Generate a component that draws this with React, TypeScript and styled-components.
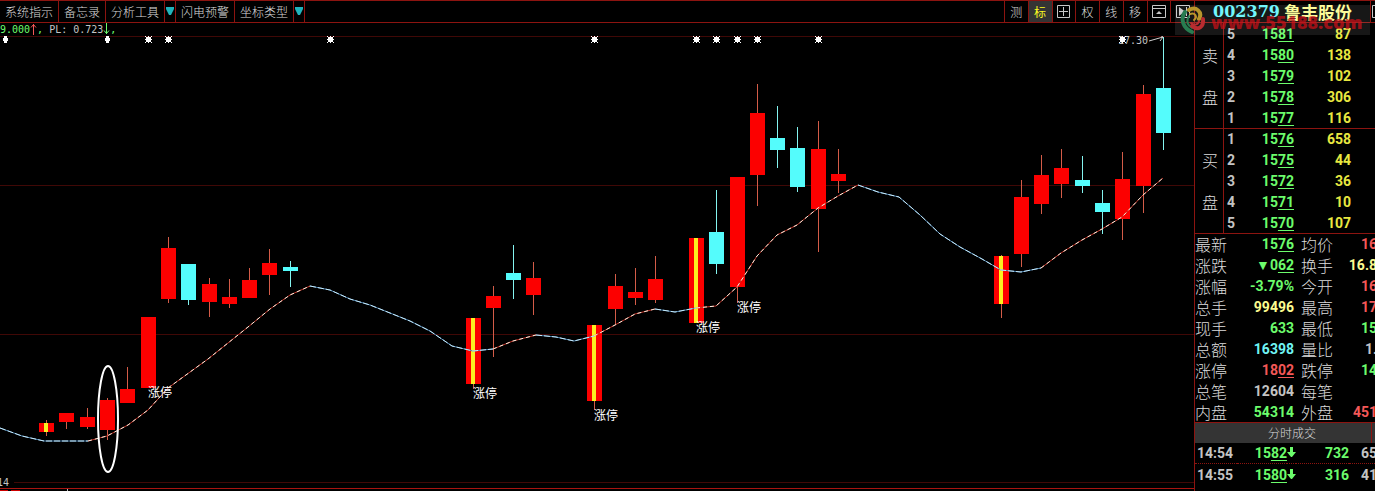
import React from "react";
import styled, { createGlobalStyle, css } from "styled-components";

const cjk = `"Noto Sans CJK SC"`;
const red = "#8c1410";
const label = "#dcdcdc";
const tones = {
  grey: "#c4c4c4",
  green: "#6cfc6c",
  yellow: "#e8e840",
  cream: "#fcfc90",
  cyan: "#70f4f4",
  red: "#f45858",
};
type Tone = keyof typeof tones;

const Global = createGlobalStyle`
  * { box-sizing: border-box; }
  body { margin: 0; background: #000; color: ${tones.grey}; font-family: "Liberation Sans", ${cjk}, sans-serif; }
`;

const Shell = styled.main`
  position: relative;
  display: grid;
  grid-template-columns: minmax(0, 1fr) 181px;
  height: 100vh;
  overflow: hidden;
`;

const ChartPane = styled.section`
  min-width: 0;
  overflow: hidden;
`;

const Toolbar = styled.nav`
  display: flex;
  justify-content: space-between;
  height: 23px;
  border-top: 1px solid ${red};
  border-bottom: 1px solid ${red};
`;

const MenuGroup = styled.div`
  display: flex;
`;

const ToolGroup = styled.div`
  display: flex;
  width: 190px;
  border-left: 1px solid ${red};
`;

const MenuButton = styled.button`
  padding: 0 5px;
  border: 0;
  border-right: 1px solid ${red};
  background: none;
  color: ${label};
  font: 300 12px/21px ${cjk}, sans-serif;
  white-space: nowrap;
`;

const DropButton = styled(MenuButton)`
  display: flex;
  align-items: center;
  width: 11px;
  padding: 0 1px;
`;

const ToolButton = styled.button<{ $active?: boolean }>`
  display: flex;
  flex: 1 1 0;
  align-items: center;
  justify-content: center;
  padding: 0;
  border: 0;
  border-right: 1px solid ${red};
  background: ${(p) => (p.$active ? "#343434" : "none")};
  color: ${(p) => (p.$active ? "#fcfc20" : label)};
  font: ${(p) => (p.$active ? 400 : 300)} 12px/21px ${cjk}, sans-serif;
  &:last-child { border-right: 0; }
`;

const Indicator = styled.p`
  display: flex;
  height: 13px;
  margin: 0;
  font: 10px/13px "DejaVu Sans Mono", monospace;
  white-space: pre;
`;

const Ink = styled.span<{ $tone: Tone }>`
  color: ${(p) => tones[p.$tone]};
`;

const Plot = styled.svg`
  display: block;
  width: 100%;
  height: auto;
`;

const QuotePane = styled.aside`
  overflow: hidden;
  border-left: 1px solid ${red};
`;

const TitleBar = styled.header`
  display: flex;
  height: 23px;
  border-top: 1px solid ${red};
  border-bottom: 1px solid ${red};
`;

const Title = styled.h1`
  display: flex;
  flex: 1;
  align-items: center;
  justify-content: center;
  gap: 4px;
  margin: 0;
  border-right: 1px solid ${red};
  color: ${tones.cream};
  font: bold 17px/21px ${cjk}, sans-serif;
`;

const Code = styled.span`
  color: #64f4fc;
  font: bold 16px/21px "DejaVu Serif", serif;
`;

const WindowButton = styled.button`
  width: 4px;
  padding: 0;
  border: 0;
  background: none;
  display: flex;
  align-items: center;
  overflow: hidden;
`;

const WindowIcon = styled.svg`
  flex-shrink: 0;
`;

const Grid = styled.table<{ $wide?: boolean; $rule?: boolean }>`
  table-layout: fixed;
  width: ${(p) => (p.$wide ? "182px" : "180px")};
  border-collapse: separate;
  border-spacing: 0;
  font: bold 14px/20px Roboto, sans-serif;
  ${(p) =>
    p.$rule &&
    css`
      tr:first-child > * { border-top: 1px solid ${red}; }
    `}
`;

const Col = styled.col<{ $w?: number }>`
  width: ${(p) => (p.$w ? `${p.$w}px` : "auto")};
`;

const Cell = styled.td<{ $tone?: Tone; $left?: boolean }>`
  height: 21px;
  padding: 0;
  color: ${(p) => tones[p.$tone ?? "grey"]};
  text-align: ${(p) => (p.$left ? "left" : "right")};
  white-space: nowrap;
`;

const Side = styled.th`
  height: 21px;
  padding: 0 0 0 2px;
  border-right: 1px solid ${red};
  color: ${label};
  font: 300 16px/20px ${cjk}, sans-serif;
  text-align: center;
`;

const Level = styled(Cell)`
  padding-left: 3px;
`;

const StatName = styled.th`
  height: 21px;
  padding: 0;
  color: ${label};
  font: 300 16px/20px ${cjk}, sans-serif;
  text-align: left;
  white-space: nowrap;
`;

const Cents = styled.span`
  text-decoration: underline 1px;
  text-underline-offset: 2px;
`;

const TradesHead = styled.h2`
  display: flex;
  height: 21px;
  margin: 0;
  border-top: 1px solid ${red};
  background: #343434;
  color: ${label};
  font: 300 12px/20px ${cjk}, sans-serif;
`;

const TradesTitle = styled.span`
  flex: 1;
  margin-right: 3px;
  padding-left: 18px;
  border-right: 1px solid ${red};
  text-align: center;
`;

const Trades = styled(Grid)`
  tr:not(:last-child) > td { border-bottom: 1px dotted ${red}; }
`;

const TimeCell = styled(Cell)`
  padding-left: 2px;
`;

const Watermark = styled.div`
  position: absolute;
  top: 5px;
  right: 5px;
  display: flex;
  align-items: center;
  width: 195px;
  height: 30px;
  background: rgba(255, 255, 255, 0.09);
  color: rgba(204, 16, 24, 0.72);
  font: 800 18px/30px "Open Sans", sans-serif;
  white-space: nowrap;
  pointer-events: none;
`;

const WatermarkText = styled.span`
  padding: 3px 0 0 4px;
`;

type Candle = {
  x: number;
  high: number;
  top: number;
  bottom: number;
  low: number;
  kind: "up" | "down" | "mark";
};

const candles: Candle[] = (
  [
    [46, 420, 423, 432, 436, "mark"],
    [66, 413, 413, 422, 429, "up"],
    [87, 408, 417, 427, 429, "up"],
    [107, 398, 400, 430, 440, "up"],
    [127, 367, 389, 403, 403, "up"],
    [148, 317, 317, 388, 388, "up"],
    [168, 237, 248, 299, 303, "up"],
    [188, 264, 264, 300, 305, "down"],
    [209, 278, 284, 302, 317, "up"],
    [229, 279, 297, 304, 308, "up"],
    [249, 268, 280, 298, 298, "up"],
    [269, 249, 263, 275, 295, "up"],
    [290, 261, 267, 271, 287, "down"],
    [473, 318, 318, 384, 389, "mark"],
    [493, 286, 296, 308, 357, "up"],
    [513, 245, 273, 280, 299, "down"],
    [533, 262, 278, 295, 315, "up"],
    [594, 325, 325, 401, 410, "mark"],
    [615, 274, 286, 309, 324, "up"],
    [635, 268, 292, 298, 305, "up"],
    [655, 256, 279, 300, 303, "up"],
    [696, 238, 238, 323, 323, "mark"],
    [716, 190, 232, 264, 274, "down"],
    [737, 177, 177, 287, 303, "up"],
    [757, 84, 113, 175, 206, "up"],
    [777, 106, 138, 150, 168, "down"],
    [797, 127, 148, 187, 192, "down"],
    [818, 121, 149, 209, 252, "up"],
    [838, 149, 174, 181, 193, "up"],
    [1001, 255, 256, 304, 318, "mark"],
    [1021, 180, 197, 254, 267, "up"],
    [1041, 155, 175, 204, 214, "up"],
    [1061, 149, 168, 184, 198, "up"],
    [1082, 156, 180, 186, 193, "down"],
    [1102, 190, 203, 212, 234, "down"],
    [1122, 152, 179, 219, 240, "up"],
    [1143, 85, 94, 186, 213, "up"],
    [1163, 37, 88, 133, 150, "down"],
  ] as [number, number, number, number, number, Candle["kind"]][]
).map(([x, high, top, bottom, low, kind]) => ({ x, high, top, bottom, low, kind }));

const average: { rising: boolean; points: string }[] = [
  { rising: false, points: "0,428 22,436 44,441 88,441" },
  { rising: true, points: "88,441 107,436 128,425 148,410 158,399 168,388 208,359 248,327 270,309 290,295 310,286" },
  { rising: false, points: "310,286 330,290 350,299 370,305 390,313 410,321 430,331 452,346 473,351 493,349" },
  { rising: true, points: "493,349 513,341 536,335" },
  { rising: false, points: "536,335 556,337 574,341 594,336" },
  { rising: true, points: "594,336 615,325 635,314 655,309" },
  { rising: false, points: "655,309 675,312 696,308" },
  { rising: true, points: "696,308 716,306 737,287 757,256 777,235 797,225 818,208 838,196 858,185" },
  { rising: false, points: "858,185 878,192 899,197 920,215 940,234 960,247 982,259 1001,270 1021,272 1041,268" },
  { rising: true, points: "1041,268 1061,253 1082,240 1102,229 1122,217 1143,195 1163,178" },
];

const stars = [148, 168, 330, 594, 696, 716, 737, 757, 818, 1122];
const limitUps = [
  [148, 397],
  [473, 398],
  [594, 420],
  [696, 332],
  [737, 312],
];

const CandleShape = ({ x, high, top, bottom, low, kind }: Candle) => {
  const down = kind === "down";
  return (
    <g>
      <rect x={x} y={high} width="1" height={low - high} fill={down ? "#84f4f0" : "#d45c48"} />
      <rect x={x - 7} y={top} width="15" height={bottom - top} fill={down ? "#54fcfc" : "#fc0000"} />
      {kind === "mark" && <rect x={x - 2} y={top} width="4" height={bottom - top} fill="#fcf020" />}
    </g>
  );
};

const CandleChart = () => (
  <Plot viewBox="0 36 1194 455" role="img" aria-label="K线图">
    <g shapeRendering="crispEdges">
      {[36, 185, 334, 482].map((y) => (
        <rect key={y} x={y === 482 ? 14 : 0} y={y} width="1194" height="1" fill="#400806" />
      ))}
      <rect x="0" y="488" width="1194" height="1" fill="#a81410" />
      <rect x="0" y="490" width="8" height="1" fill="#c00" />
      <rect x="11" y="490" width="9" height="1" fill="#c00" />
      <rect x="67" y="489" width="1" height="2" fill="#bbb" />
      {candles.map((c) => (
        <CandleShape key={c.x} {...c} />
      ))}
    </g>
    {average.map(({ rising, points }) => (
      <g key={points} fill="none">
        <polyline points={points} stroke={rising ? "#c43428" : "#4c84b4"} />
        <polyline points={points} stroke={rising ? "#fcf0e0" : "#c8ecfc"} strokeDasharray={rising ? "4 3" : "6 2"} />
      </g>
    ))}
    <text x="1118" y="44" fontFamily="DejaVu Sans Mono, monospace" fontSize="10" fill="#c4c4c4">17.30</text>
    <path d="M1149 41 L1163 37 M1158 34 L1163 37 L1160 41" fill="none" stroke="#d0d0d0" />
    <g fill="#fff" shapeRendering="crispEdges">
      {stars.map((x) => (
        <path
          key={x}
          d={`M${x - 2} 37h5v5h-5z M${x - 3} 36h1v1h-1z M${x + 3} 36h1v1h-1z M${x - 3} 42h1v1h-1z M${x + 3} 42h1v1h-1z M${x - 3} 39h7v1h-7z M${x} 36h1v7h-1z`}
        />
      ))}
      {[5, 107].map((x) => (
        <path key={x} d={`M${x - 1} 36h3v7h-3z M${x - 2} 38h5v3h-5z`} />
      ))}
    </g>
    <g fill="#fff" fontFamily="Noto Sans CJK SC, sans-serif" fontSize="12">
      {limitUps.map(([x, y]) => (
        <text key={x} x={x} y={y}>涨停</text>
      ))}
    </g>
    <text x="-3" y="486" fontFamily="DejaVu Sans Mono, monospace" fontSize="10" fill="#c4c4c4">14</text>
    <ellipse cx="108" cy="419" rx="10" ry="53" fill="none" stroke="#fff" strokeWidth="2" />
  </Plot>
);

const Trend = ({ up }: { up?: boolean }) => (
  <svg width="7" height="13" viewBox="0 0 7 13" fill="none" stroke={up ? tones.red : tones.green} aria-label={up ? "↑" : "↓"}>
    <path d={up ? "M3.500 12V1 M1 4.500 3.500 1.500 6 4.500" : "M3.500 0v11 M1 7.500 3.500 10.500 6 7.500"} />
  </svg>
);

const Caret = () => (
  <svg width="8" height="9" viewBox="0 0 8 9" aria-hidden="true">
    <path d="M0 0h8v2L5 8H3L0 2z" fill="#20b4bc" />
  </svg>
);

const PlusBox = () => (
  <svg width="13" height="13" viewBox="0 0 13 13" fill="none" stroke="#c8c8c8" aria-hidden="true">
    <path d="M.5 .5h12v12H.5z M6.5 2v9 M2 6.5h9" />
  </svg>
);

const CollapseBox = () => (
  <svg width="14" height="13" viewBox="0 0 14 13" fill="none" stroke="#c8c8c8" aria-hidden="true">
    <path d="M.5 .5h13v12H.5z M1 3.5h12" />
    <path d="M4 9 7 6l3 3z" fill="#c8c8c8" stroke="none" />
  </svg>
);

const NextBox = () => (
  <svg width="14" height="13" viewBox="0 0 14 13" fill="none" stroke="#c8c8c8" aria-hidden="true">
    <path d="M.5 .5h13v12H.5z M10.5 2v9" />
    <path d="M3 2l6 4.500L3 11z" fill="#c8c8c8" stroke="none" />
  </svg>
);

const DownArrow = () => (
  <svg width="9" height="11" viewBox="0 0 9 11" aria-hidden="true">
    <path d="M3 0h3v5h3L5 10H4L0 5h3z" fill="#6cfc6c" />
  </svg>
);

const SwirlLogo = () => (
  <svg width="32" height="30" viewBox="0 0 32 30" fill="none" strokeLinecap="round" strokeWidth="4" aria-hidden="true">
    <path d="M14 5c7-4 14 2 10 9" stroke="#b8962c" />
    <path d="M15 9c5-2 8 3 4 6" stroke="#b8962c" strokeWidth="2" />
    <path d="M10 7c-5 7-2 16 7 20" stroke="#287c50" />
    <path d="M14 11c-4 6 0 10 3 12" stroke="#287c50" strokeWidth="2" />
    <path d="M28 14c1 8-5 12-11 7" stroke="#b82c30" />
    <path d="M24 16c-1 4-5 5-8 2" stroke="#b82c30" strokeWidth="2" />
  </svg>
);

const Price = ({ value }: { value: string }) => (
  <>
    {value.slice(0, -2)}
    <Cents>{value.slice(-2)}</Cents>
  </>
);

const asks = [["5", "1581", "87"], ["4", "1580", "138"], ["3", "1579", "102"], ["2", "1578", "306"], ["1", "1577", "116"]];
const bids = [["1", "1576", "658"], ["2", "1575", "44"], ["3", "1572", "36"], ["4", "1571", "10"], ["5", "1570", "107"]];

const Columns = ({ widths }: { widths: (number | undefined)[] }) => (
  <colgroup>
    {widths.map((w, i) => (
      <Col key={i} $w={w} />
    ))}
  </colgroup>
);

const OrderBook = ({ side, rows, rule }: { side: string; rows: string[][]; rule?: boolean }) => (
  <Grid $rule={rule}>
    <Columns widths={[29, 20, 50, 57, undefined]} />
    <tbody>
      {rows.map(([level, price, volume], i) => (
        <tr key={level}>
          <Side>{i === 1 ? side : i === 3 ? "盘" : null}</Side>
          <Level $left>{level}</Level>
          <Cell $tone="green"><Price value={price} /></Cell>
          <Cell $tone="yellow">{volume}</Cell>
          <Cell />
        </tr>
      ))}
    </tbody>
  </Grid>
);

type Stat = { name: string; value: string; tone: Tone; cents?: boolean; name2: string; value2: string; tone2: Tone };
const stats: Stat[] = [
  { name: "最新", value: "1576", tone: "green", cents: true, name2: "均价", value2: "16", tone2: "red" },
  { name: "涨跌", value: "▼062", tone: "green", cents: true, name2: "换手", value2: "16.8", tone2: "cream" },
  { name: "涨幅", value: "-3.79%", tone: "green", name2: "今开", value2: "16", tone2: "red" },
  { name: "总手", value: "99496", tone: "cream", name2: "最高", value2: "17", tone2: "red" },
  { name: "现手", value: "633", tone: "green", name2: "最低", value2: "15", tone2: "green" },
  { name: "总额", value: "16398", tone: "cyan", name2: "量比", value2: "1.", tone2: "grey" },
  { name: "涨停", value: "1802", tone: "red", cents: true, name2: "跌停", value2: "14", tone2: "green" },
  { name: "总笔", value: "12604", tone: "grey", name2: "每笔", value2: "", tone2: "grey" },
  { name: "内盘", value: "54314", tone: "green", name2: "外盘", value2: "451", tone2: "red" },
];

const trades = [["14:54", "1582", "732", "65"], ["14:55", "1580", "316", "41"]];

export default function App() {
  return (
    <>
      <Global />
      <Shell>
        <ChartPane>
          <Toolbar>
            <MenuGroup>
              <MenuButton>系统指示</MenuButton>
              <MenuButton>备忘录</MenuButton>
              <MenuButton>分析工具</MenuButton>
              <DropButton aria-label="分析工具菜单"><Caret /></DropButton>
              <MenuButton>闪电预警</MenuButton>
              <MenuButton>坐标类型</MenuButton>
              <DropButton aria-label="坐标类型菜单"><Caret /></DropButton>
            </MenuGroup>
            <ToolGroup>
              <ToolButton>测</ToolButton>
              <ToolButton $active>标</ToolButton>
              <ToolButton aria-label="十字"><PlusBox /></ToolButton>
              <ToolButton>权</ToolButton>
              <ToolButton>线</ToolButton>
              <ToolButton>移</ToolButton>
              <ToolButton aria-label="收起"><CollapseBox /></ToolButton>
              <ToolButton aria-label="下一个"><NextBox /></ToolButton>
            </ToolGroup>
          </Toolbar>
          <Indicator>
            <Ink $tone="green">9.000</Ink>
            <Trend up />
            <Ink $tone="green">,</Ink>
            <span> PL: 0.723</span>
            <Trend />
            <Ink $tone="green">,</Ink>
          </Indicator>
          <CandleChart />
        </ChartPane>

        <QuotePane>
          <TitleBar>
            <Title><Code>002379</Code>鲁丰股份</Title>
            <WindowButton aria-label="窗口">
              <WindowIcon width="13" height="13" viewBox="0 0 13 13" fill="none" stroke="#c8c8c8">
                <path d="M1.500 .5h11v12h-11z M4 3.500h6" />
              </WindowIcon>
            </WindowButton>
          </TitleBar>
          <OrderBook side="卖" rows={asks} />
          <OrderBook side="买" rows={bids} rule />
          <Grid $wide $rule>
            <Columns widths={[32, 67, 7, 32, 44]} />
            <tbody>
              {stats.map((s) => (
                <tr key={s.name}>
                  <StatName scope="row">{s.name}</StatName>
                  <Cell $tone={s.tone}>{s.cents ? <Price value={s.value} /> : s.value}</Cell>
                  <Cell />
                  <StatName scope="row">{s.name2}</StatName>
                  <Cell $tone={s.tone2}>{s.value2}</Cell>
                </tr>
              ))}
            </tbody>
          </Grid>
          <TradesHead><TradesTitle>分时成交</TradesTitle></TradesHead>
          <Trades $wide>
            <Columns widths={[42, 50, 9, 53, 28]} />
            <tbody>
              {trades.map(([time, price, volume, count]) => (
                <tr key={time}>
                  <TimeCell $left>{time}</TimeCell>
                  <Cell $tone="green"><Price value={price} /></Cell>
                  <Cell $tone="green" $left><DownArrow /></Cell>
                  <Cell $tone="green">{volume}</Cell>
                  <Cell>{count}</Cell>
                </tr>
              ))}
            </tbody>
          </Trades>
        </QuotePane>

        <Watermark aria-hidden="true">
          <SwirlLogo />
          <WatermarkText>www.55188.com</WatermarkText>
        </Watermark>
      </Shell>
    </>
  );
}
